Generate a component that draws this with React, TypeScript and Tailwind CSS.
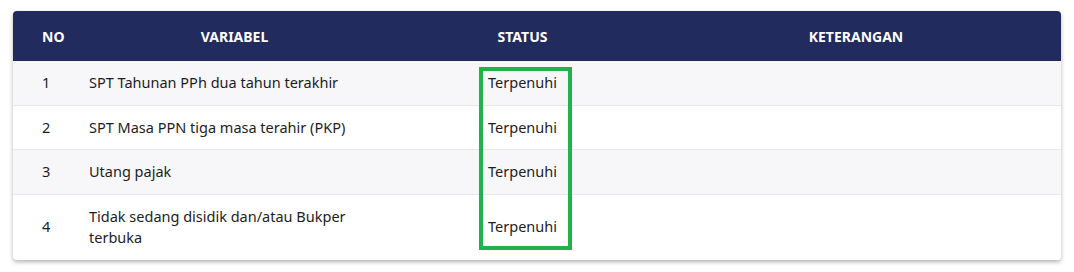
const rows = [
  { no: "1", variabel: "SPT Tahunan PPh dua tahun terakhir", status: "Terpenuhi", ket: "" },
  { no: "2", variabel: "SPT Masa PPN tiga masa terahir (PKP)", status: "Terpenuhi", ket: "" },
  { no: "3", variabel: "Utang pajak", status: "Terpenuhi", ket: "" },
  { no: "4", variabel: "Tidak sedang disidik dan/atau Bukper terbuka", status: "Terpenuhi", ket: "" },
];

export default function App() {
  return (
    <div className="min-h-screen bg-white px-[13px] pt-[11px] pb-3 font-['Noto_Sans',sans-serif] text-[#1d1d1f]">
      {/* Card */}
      <div className="relative overflow-hidden rounded-[4px] bg-white shadow-[0_2px_4px_rgba(0,0,0,0.3)]">
        <table className="w-full table-fixed border-collapse">
          <colgroup>
            <col className="w-[62px]" />
            <col className="w-[319px]" />
            <col className="w-[257px]" />
            <col />
          </colgroup>
          <thead>
            <tr className="h-[50px] bg-[#212b5e] text-[14px] font-bold text-white">
              <th className="pl-[29px] text-left">NO</th>
              <th className="text-center">VARIABEL</th>
              <th className="text-center">STATUS</th>
              <th className="text-center">KETERANGAN</th>
            </tr>
          </thead>
          <tbody className="text-[14.5px] leading-[21.5px]">
            {rows.map((r, i) => (
              <tr
                key={r.no}
                className={`${i % 2 === 0 ? "bg-[#f7f7fa]" : "bg-white"} ${i < rows.length - 1 ? "border-b border-[#e7e7ec]" : ""}`}
              >
                <td className="py-[11px] pl-[29px]">{r.no}</td>
                <td className="px-[14px] py-[11px] pr-[36px]">{r.variabel}</td>
                <td className="py-[11px] text-center">{r.status}</td>
                <td className="py-[11px]">{r.ket}</td>
              </tr>
            ))}
          </tbody>
        </table>

        {/* highlight box over status column */}
        <div className="pointer-events-none absolute left-[466px] top-[56px] h-[183px] w-[93px] border-[4px] border-[#21b24b]" />
      </div>
    </div>
  );
}
